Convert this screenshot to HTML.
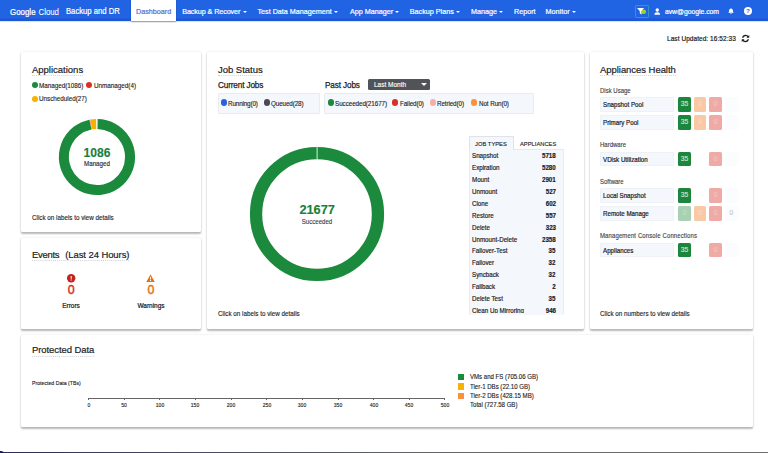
<!DOCTYPE html>
<html><head><meta charset="utf-8"><title>Backup and DR - Dashboard</title>
<style>
*{box-sizing:border-box;margin:0;padding:0}
html,body{width:768px;height:453px;overflow:hidden;background:#fff}
body{font-family:"Liberation Sans",sans-serif;color:#202124;position:relative;font-size:6.3px;-webkit-text-stroke:.12px}
.a{position:absolute;white-space:nowrap}
#nav{position:absolute;left:0;top:0;width:768px;height:21.400px;background:linear-gradient(#2064e3 0,#2064e3 17.500px,#1d59d6 19px,#1c57d2 21.400px);box-shadow:0 .5px 1.5px rgba(0,0,0,.3)}
#nav .it{position:absolute;top:0;height:21px;line-height:23.4px;color:#fff;font-size:7.2px;white-space:nowrap;-webkit-text-stroke:.2px #fff}
#nav .act{background:#fff;color:#4f64c6;text-align:center;-webkit-text-stroke:.15px #4f64c6;height:21.200px;box-shadow:0 1px 1.200px rgba(0,0,0,.35)}
.car{display:inline-block;width:0;height:0;border-left:2.100px solid transparent;border-right:2.100px solid transparent;border-top:2.500px solid #fff;vertical-align:.600px;margin-left:2.300px}
.card{position:absolute;background:#fff;border-radius:1.5px;box-shadow:0 1.400px 2px rgba(0,0,0,.27),0 0 2.500px rgba(0,0,0,.08)}
.title{position:absolute;font-size:9.900px;color:#202124;white-space:nowrap;line-height:12px;-webkit-text-stroke:.2px #202124;transform:scaleX(.96);transform-origin:0 50%}
.title i{position:absolute;left:0;right:0;top:11.300px;height:0;border-bottom:1px dotted #cdd0d4}
.dot{position:absolute;width:6.2px;height:6.2px;border-radius:50%}
.lg{position:absolute;white-space:nowrap;font-size:6.740px;line-height:8px;color:#202124;transform:scaleX(.935);transform-origin:0 50%}
.sub{position:absolute;transform:scaleX(.94);transform-origin:0 50%;font-size:8.700px;white-space:nowrap;color:#202124;line-height:10px;-webkit-text-stroke:.25px #202124}
.foot{position:absolute;font-size:6.720px;white-space:nowrap;color:#202124;line-height:8px;transform:scaleX(.935);transform-origin:0 50%}
.lbox{position:absolute;background:#f4f7fb;border:1px solid #e8ecf1;border-radius:1px}
.sec{position:absolute;left:599.8px;transform:scaleX(.935);transform-origin:0 50%;font-size:6.420px;line-height:8px;white-space:nowrap;color:#3c4043;margin-top:.4px}
.hl{position:absolute;left:599.8px;width:74.6px;height:14.700px;background:#f4f7fb;border:1px solid #eef1f5;border-radius:1px;font-size:6.630px;line-height:13.300px;padding-left:2.100px;white-space:nowrap;color:#202124;-webkit-text-stroke:.2px #202124}
.hl span{display:inline-block;transform:scaleX(.935);transform-origin:0 50%}
.hb{position:absolute;width:12.800px;height:14.700px;border-radius:1.500px;font-size:6.700px;line-height:14.900px;text-align:center;color:#fff;-webkit-text-stroke:.15px}
.tr{position:absolute;left:472.2px;width:83.6px;font-size:6.630px;line-height:8px;white-space:nowrap;color:#202124;-webkit-text-stroke:.18px}
.tr span{display:inline-block;transform:scaleX(.935);transform-origin:0 50%}
.tr b{position:absolute;right:0;top:0;transform:scaleX(.935);transform-origin:100% 50%}
.tk{position:absolute;transform:scaleX(.935);font-size:5.350px;line-height:6px;width:20px;text-align:center;color:#202124;top:402.3px}
.pl{position:absolute;left:469.8px;font-size:6.520px;transform:scaleX(.935);transform-origin:0 50%;letter-spacing:-.02px;line-height:8px;white-space:nowrap;color:#202124}
.sq{position:absolute;left:457.500px;width:6.200px;height:6.200px}
</style></head><body>

<div id="nav">
<div class="it" style="left:10.400px;font-size:8.400px;line-height:24.400px;transform:scaleX(.935);transform-origin:0 50%;letter-spacing:.05px"><span style="-webkit-text-stroke:.24px #fff">Google</span> <span style="-webkit-text-stroke:.06px #fff;margin-left:.900px;letter-spacing:-.06px">Cloud</span></div>
<div class="it" style="left:66.100px;font-size:8.200px;line-height:24.400px;transform:scaleX(.937);transform-origin:0 50%">Backup and DR</div>
<div class="it act" style="left:130.800px;width:45.600px">Dashboard</div>
<div class="it" style="left:182.2px;letter-spacing:-0.09px">Backup &amp; Recover<span class="car"></span></div>
<div class="it" style="left:257.5px;letter-spacing:0px">Test Data Management<span class="car"></span></div>
<div class="it" style="left:349.9px;letter-spacing:0px">App Manager<span class="car"></span></div>
<div class="it" style="left:409.8px;letter-spacing:0px">Backup Plans<span class="car"></span></div>
<div class="it" style="left:471px;letter-spacing:0px">Manage<span class="car"></span></div>
<div class="it" style="left:514px;letter-spacing:0px">Report</div>
<div class="it" style="left:545.6px;letter-spacing:0px">Monitor<span class="car"></span></div>
<div class="a" style="left:635px;top:4.8px;width:13.5px;height:13.5px;border:.8px solid rgba(70,190,170,.55);border-radius:1.5px"></div>
<svg class="a" style="left:637px;top:7px" width="10" height="10" viewBox="0 0 10 10"><path d="M0 1h7L4.600 4.300v3.300L2.800 6.600V4.300z" fill="#fff"/><circle cx="6.700" cy="4.800" r="2.300" fill="#9ad62f"/></svg>
<svg class="a" style="left:653.800px;top:7.600px" width="6.500" height="7.200" viewBox="0 0 7 8"><circle cx="3.5" cy="2.2" r="1.9" fill="#fff"/><path d="M0.3 7.6c0-2.2 1.3-3 3.2-3s3.2.8 3.2 3z" fill="#fff"/></svg>
<div class="it" style="left:664.9px;font-size:6.8px">avw@google.com</div>
<svg class="a" style="left:728px;top:8px" width="6" height="6.400" viewBox="0 0 14 15"><path d="M7 0.5c.8 0 1.2.5 1.2 1.2 2.2.6 3.3 2.4 3.3 4.8 0 2.600 .9 3.600 2 4.500H.5c1.100-.9 2-1.900 2-4.500 0-2.400 1.100-4.200 3.300-4.800C5.800 1 6.200.5 7 .5zM5.200 12h3.600c0 1.200-.8 2-1.800 2s-1.800-.8-1.800-2z" fill="#fff"/></svg>
<svg class="a" style="left:743.700px;top:6.600px" width="8" height="8" viewBox="0 0 16 16"><circle cx="8" cy="8" r="8" fill="#fff"/><text x="8" y="12.600" text-anchor="middle" font-family="Liberation Sans,sans-serif" font-weight="bold" font-size="12.500" fill="#2064e3">?</text></svg>
</div>
<div class="a" style="left:667px;top:34.5px;font-size:6.950px;transform:scaleX(.935);transform-origin:0 50%;line-height:8px;letter-spacing:.07px;-webkit-text-stroke:.2px">Last Updated: 16:52:33</div>
<svg class="a" style="left:740.900px;top:33.700px" width="9" height="9" viewBox="0 0 18 18"><path d="M14.500 6.500A6 6 0 0 0 3.200 7.500" fill="none" stroke="#202124" stroke-width="2.600"/><path d="M3.500 11.500A6 6 0 0 0 14.800 10.500" fill="none" stroke="#202124" stroke-width="2.600"/><path d="M16.500 2v5.500H11z" fill="#202124"/><path d="M1.500 16v-5.500H7z" fill="#202124"/></svg>
<div class="card" style="left:20.5px;top:52.4px;width:180.7px;height:180.1px"></div>
<div class="title" style="left:31.8px;top:63.5px;letter-spacing:0px">Applications<i></i></div>
<div class="dot" style="left:31.6px;top:82.15px;background:#1a8a3c"></div>
<div class="lg" style="left:39.2px;top:81.5px;letter-spacing:0px">Managed(1086)</div>
<div class="dot" style="left:86.1px;top:82.15px;background:#d93025"></div>
<div class="lg" style="left:93.7px;top:81.5px;letter-spacing:0px">Unmanaged(4)</div>
<div class="dot" style="left:31.6px;top:95.75px;background:#f9b000"></div>
<div class="lg" style="left:38.8px;top:95.1px;letter-spacing:0px">Unscheduled(27)</div>
<svg class="a" style="left:56.800px;top:116.600px" width="80" height="80" viewBox="-40 -40 80 80">
<path d="M0.58 -33.09 A33.10 33.10 0 1 1 -6.54 -32.45" fill="none" stroke="#1b8a3c" stroke-width="10"/>
<path d="M-6.32 -32.49 A33.10 33.10 0 0 1 -5.98 -32.56" fill="none" stroke="#d93025" stroke-width="10"/>
<path d="M-5.75 -32.60 A33.10 33.10 0 0 1 -0.81 -33.09" fill="none" stroke="#f9b000" stroke-width="10"/>
</svg>
<div class="a" style="left:57px;width:80px;text-align:center;top:145.600px;font-size:12.100px;font-weight:bold;color:#188038;line-height:14px">1086</div>
<div class="a" style="left:57px;width:80px;text-align:center;top:160px;font-size:6.630px;transform:scaleX(.935);line-height:8px">Managed</div>
<div class="foot" style="left:31.8px;top:214.400px">Click on labels to view details</div>
<div class="card" style="left:20.5px;top:238.4px;width:180.7px;height:90.3px"></div>
<div class="title" style="left:31.7px;top:249.200px;letter-spacing:-.08px"><span style="letter-spacing:-.32px">Events</span><span style="display:inline-block;width:6.300px"></span>(Last 24 Hours)<i></i></div>
<svg class="a" style="left:67.3px;top:274.3px" width="8.4" height="8.4" viewBox="0 0 16 16"><circle cx="8" cy="8" r="8" fill="#c5221f"/><rect x="7" y="3.800" width="2" height="5.400" fill="#fff"/><rect x="7" y="10.400" width="2" height="2" fill="#fff"/></svg>
<div class="a" style="left:51.2px;width:40px;text-align:center;top:283.100px;font-size:12.400px;color:#d93025;line-height:14px;-webkit-text-stroke:.45px">0</div>
<div class="a" style="left:51.3px;width:40px;text-align:center;top:301.800px;font-size:6.950px;transform:scaleX(.935);line-height:8px;-webkit-text-stroke:.22px">Errors</div>
<svg class="a" style="left:146.300px;top:273.900px" width="9" height="8.4" viewBox="0 0 18 16"><path d="M9 0.500L17.500 15.500H0.500z" fill="#e8710a"/><rect x="8" y="5.500" width="2" height="5" fill="#fff"/><rect x="8" y="11.600" width="2" height="2" fill="#fff"/></svg>
<div class="a" style="left:130.900px;width:40px;text-align:center;top:283.100px;font-size:12.400px;color:#e8710a;line-height:14px;-webkit-text-stroke:.45px">0</div>
<div class="a" style="left:131.2px;width:40px;text-align:center;top:301.800px;font-size:6.950px;transform:scaleX(.935);line-height:8px;-webkit-text-stroke:.22px">Warnings</div>
<div class="card" style="left:207.4px;top:52.4px;width:376.6px;height:276.3px"></div>
<div class="title" style="left:217.8px;top:63.5px;letter-spacing:-0.02px">Job Status<i></i></div>
<div class="sub" style="left:217.800px;top:79.700px;letter-spacing:-.14px">Current Jobs</div>
<div class="sub" style="left:324.600px;top:79.700px;letter-spacing:-.12px">Past Jobs</div>
<div class="a" style="left:368.3px;top:79.400px;width:62px;height:10.200px;background:#505357;border-radius:1.5px;color:#fff;font-size:6.950px;line-height:11.600px;padding-left:5.700px;-webkit-text-stroke:.15px #fff"><span style="display:inline-block;transform:scaleX(.935);transform-origin:0 50%">Last Month</span><span style="position:absolute;left:53px;top:3.800px;width:0;height:0;border-left:3px solid transparent;border-right:3px solid transparent;border-top:3.400px solid #fff"></span></div>
<div class="lbox" style="left:218px;top:93px;width:102.400px;height:20.600px"></div>
<div class="dot" style="left:221.1px;top:99.45px;background:#2b5fe3"></div>
<div class="lg" style="left:228.4px;top:99.8px;letter-spacing:-0.15px">Running(0)</div>
<div class="dot" style="left:264.1px;top:99.45px;background:#4a4b50"></div>
<div class="lg" style="left:270.9px;top:99.8px;letter-spacing:-0.12px">Queued(28)</div>
<div class="lbox" style="left:324px;top:93px;width:210.200px;height:20.600px"></div>
<div class="dot" style="left:327.5px;top:99.45px;background:#1a8a3c"></div>
<div class="lg" style="left:334.8px;top:99.8px;letter-spacing:-0.08px">Succeeded(21677)</div>
<div class="dot" style="left:392.3px;top:99.45px;background:#d93025"></div>
<div class="lg" style="left:399.8px;top:99.8px;letter-spacing:-0.12px">Failed(0)</div>
<div class="dot" style="left:430.2px;top:99.45px;background:#f6aea9"></div>
<div class="lg" style="left:436.9px;top:99.8px;letter-spacing:-0.12px">Retried(0)</div>
<div class="dot" style="left:471.2px;top:99.45px;background:#fa903e"></div>
<div class="lg" style="left:478.5px;top:99.8px;letter-spacing:-0.1px">Not Run(0)</div>
<svg class="a" style="left:247px;top:143.750px" width="140" height="140" viewBox="-70 -70 140 140">
<circle r="60.950" fill="none" stroke="#1b8a3c" stroke-width="12.300"/>
<rect x="-0.400" y="-68" width="1" height="14" fill="#dcecdf"/>
</svg>
<div class="a" style="left:247.200px;width:140px;text-align:center;top:202.900px;font-size:12.800px;font-weight:bold;color:#188038;line-height:14px">21677</div>
<div class="a" style="left:247.200px;width:140px;text-align:center;top:218.200px;font-size:6.520px;transform:scaleX(.935);line-height:8px;color:#3c4043">Succeeded</div>
<div class="foot" style="left:217.700px;top:309.700px">Click on labels to view details</div>
<div class="a" style="left:468.700px;top:149.400px;width:95.500px;height:165.700px;background:#f4f7fb;border-left:1px solid #e8ecf1;border-right:1px solid #e8ecf1;border-radius:0 0 1.500px 1.500px"></div>
<div class="a" style="left:468.700px;top:136.200px;width:45.400px;height:13.400px;background:#f4f7fb;border:1px solid #dfe3e8;border-bottom:none;border-radius:1px 1px 0 0;font-size:6.200px;line-height:13.200px;text-align:center;color:#202124"><span style="display:inline-block;transform:scaleX(.935);">JOB TYPES</span></div>
<div class="a" style="left:514.100px;top:149px;width:50px;height:0;border-top:1px solid #e4e8ed"></div>
<div class="a" style="left:520px;top:136.700px;height:13px;font-size:6.200px;transform:scaleX(.935);transform-origin:0 50%;line-height:13.600px;color:#202124">APPLIANCES</div>
<div class="a" style="left:0;top:0;width:768px;height:313.100px;overflow:hidden">
<div class="tr" style="top:151.80px"><span>Snapshot</span><b>5718</b></div>
<div class="tr" style="top:163.76px"><span>Expiration</span><b>5280</b></div>
<div class="tr" style="top:175.72px"><span>Mount</span><b>2901</b></div>
<div class="tr" style="top:187.68px"><span>Unmount</span><b>527</b></div>
<div class="tr" style="top:199.64px"><span>Clone</span><b>602</b></div>
<div class="tr" style="top:211.60px"><span>Restore</span><b>557</b></div>
<div class="tr" style="top:223.56px"><span>Delete</span><b>323</b></div>
<div class="tr" style="top:235.52px"><span>Unmount-Delete</span><b>2358</b></div>
<div class="tr" style="top:247.48px"><span>Failover-Test</span><b>35</b></div>
<div class="tr" style="top:259.44px"><span>Failover</span><b>32</b></div>
<div class="tr" style="top:271.40px"><span>Syncback</span><b>32</b></div>
<div class="tr" style="top:283.36px"><span>Failback</span><b>2</b></div>
<div class="tr" style="top:295.32px"><span>Delete Test</span><b>35</b></div>
<div class="tr" style="top:307.28px"><span>Clean Up Mirroring</span><b>946</b></div>
</div>
<div class="card" style="left:589.5px;top:52.4px;width:163.0px;height:276.3px"></div>
<div class="title" style="left:599.8px;top:63.5px;letter-spacing:-0.04px">Appliances Health<i></i></div>
<div class="sec" style="top:86.40px">Disk Usage</div>
<div class="hl" style="top:97.30px"><span>Snapshot Pool</span></div>
<div class="hb" style="left:678.1px;top:97.30px;background:#1b873d;color:#cfe8d5">35</div>
<div class="hb" style="left:693.7px;top:97.30px;background:#f9c9a5;color:#fbd9c0">0</div>
<div class="hb" style="left:709.3px;top:97.30px;background:#f0aaa6;color:#f5c4c1">0</div>
<div class="hb" style="left:725px;top:97.30px;background:#fbfcfd;color:#fff"></div>
<div class="hl" style="top:115.00px"><span>Primary Pool</span></div>
<div class="hb" style="left:678.1px;top:115.00px;background:#1b873d;color:#cfe8d5">35</div>
<div class="hb" style="left:693.7px;top:115.00px;background:#f9c9a5;color:#fbd9c0">0</div>
<div class="hb" style="left:709.3px;top:115.00px;background:#f0aaa6;color:#f5c4c1">0</div>
<div class="hb" style="left:725px;top:115.00px;background:#fbfcfd;color:#fff"></div>
<div class="sec" style="top:141.00px">Hardware</div>
<div class="hl" style="top:151.60px"><span>VDisk Utilization</span></div>
<div class="hb" style="left:678.1px;top:151.60px;background:#1b873d;color:#cfe8d5">35</div>
<div class="hb" style="left:709.3px;top:151.60px;background:#f0aaa6;color:#f5c4c1">0</div>
<div class="hb" style="left:725px;top:151.60px;background:#fbfcfd;color:#fff"></div>
<div class="sec" style="top:177.30px">Software</div>
<div class="hl" style="top:188.30px"><span>Local Snapshot</span></div>
<div class="hb" style="left:678.1px;top:188.30px;background:#1b873d;color:#cfe8d5">35</div>
<div class="hb" style="left:709.3px;top:188.30px;background:#f0aaa6;color:#f5c4c1">0</div>
<div class="hb" style="left:725px;top:188.30px;background:#fbfcfd;color:#fff"></div>
<div class="hl" style="top:206.00px"><span>Remote Manage</span></div>
<div class="hb" style="left:678.1px;top:206.00px;background:#a8d1b3;color:#c2dfc9">0</div>
<div class="hb" style="left:693.7px;top:206.00px;background:#f9c9a5;color:#fbd9c0">0</div>
<div class="hb" style="left:709.3px;top:206.00px;background:#f0aaa6;color:#f5c4c1">0</div>
<div class="hb" style="left:725px;top:206.00px;background:#fbfcfd;color:#c4c7cb">0</div>
<div class="sec" style="top:231.80px"><span style="letter-spacing:.125px">Management Console Connections</span></div>
<div class="hl" style="top:242.70px"><span>Appliances</span></div>
<div class="hb" style="left:678.1px;top:242.70px;background:#1b873d;color:#cfe8d5">35</div>
<div class="hb" style="left:709.3px;top:242.70px;background:#f0aaa6;color:#f5c4c1">0</div>
<div class="hb" style="left:725px;top:242.70px;background:#fbfcfd;color:#fff"></div>
<div class="foot" style="left:599.800px;top:309.700px">Click on numbers to view details</div>
<div class="card" style="left:20.5px;top:334.5px;width:732.0px;height:92.9px"></div>
<div class="title" style="left:31.7px;top:344.4px;letter-spacing:-0.08px">Protected Data<i></i></div>
<div class="a" style="left:31.700px;top:380.400px;font-size:5.560px;transform:scaleX(.935);transform-origin:0 50%;line-height:6px;color:#202124">Protected Data (TBs)</div>
<div class="a" style="left:88.200px;top:397.800px;width:357px;height:0;border-top:0.700px solid #666"></div>
<div class="a" style="left:88.15px;top:398px;width:0.600px;height:2.300px;background:#666"></div>
<div class="tk" style="left:78.50px">0</div>
<div class="a" style="left:123.78px;top:398px;width:0.600px;height:2.300px;background:#666"></div>
<div class="tk" style="left:114.13px">50</div>
<div class="a" style="left:159.41px;top:398px;width:0.600px;height:2.300px;background:#666"></div>
<div class="tk" style="left:149.76px">100</div>
<div class="a" style="left:195.04px;top:398px;width:0.600px;height:2.300px;background:#666"></div>
<div class="tk" style="left:185.39px">150</div>
<div class="a" style="left:230.67px;top:398px;width:0.600px;height:2.300px;background:#666"></div>
<div class="tk" style="left:221.02px">200</div>
<div class="a" style="left:266.30px;top:398px;width:0.600px;height:2.300px;background:#666"></div>
<div class="tk" style="left:256.65px">250</div>
<div class="a" style="left:301.93px;top:398px;width:0.600px;height:2.300px;background:#666"></div>
<div class="tk" style="left:292.28px">300</div>
<div class="a" style="left:337.56px;top:398px;width:0.600px;height:2.300px;background:#666"></div>
<div class="tk" style="left:327.91px">350</div>
<div class="a" style="left:373.19px;top:398px;width:0.600px;height:2.300px;background:#666"></div>
<div class="tk" style="left:363.54px">400</div>
<div class="a" style="left:408.82px;top:398px;width:0.600px;height:2.300px;background:#666"></div>
<div class="tk" style="left:399.17px">450</div>
<div class="a" style="left:444.45px;top:398px;width:0.600px;height:2.300px;background:#666"></div>
<div class="tk" style="left:434.80px">500</div>
<div class="sq" style="top:373.80px;background:#1a8a3c"></div>
<div class="pl" style="top:372.90px">VMs and FS (705.06 GB)</div>
<div class="sq" style="top:383.40px;background:#f9b000"></div>
<div class="pl" style="top:382.50px">Tier-1 DBs (22.10 GB)</div>
<div class="sq" style="top:393.00px;background:#fa903e"></div>
<div class="pl" style="top:392.10px">Tier-2 DBs (428.15 MB)</div>
<div class="pl" style="top:401.00px">Total (727.58 GB)</div>
<div class="a" style="left:0;top:452px;width:768px;height:2px;background:linear-gradient(90deg,#2b2b58 0,#4a4a60 25%,#666 60%,#6e6e6e)"></div>
<div class="a" style="left:0;top:450.500px;width:4px;height:3px;background:#1a1a5e;border-radius:0 3px 0 0"></div>

</body></html>
